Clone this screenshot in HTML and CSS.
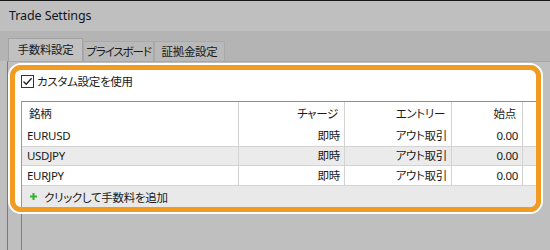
FILE: index.html
```html
<!DOCTYPE html>
<html lang="ja">
<head>
    <meta charset="UTF-8">
    <title>Trade Settings</title>
    <link rel="stylesheet" href="styles.css">
</head>
<body>
    <div class="edge"></div>
    <div class="titlebar">Trade Settings</div>

    <div class="tabstrip">
        <div class="tab active">手数料設定</div>
        <div class="tab tight">プライスボード</div>
        <div class="tab">証拠金設定</div>
    </div>

    <div class="panel">
        <div class="spot">
            <div class="spot-inner">
                <label class="check-row">
                    <span class="checkbox">
                        <svg width="11" height="11" viewBox="0 0 11 11">
                            <path d="M1.5 5.5 L4.2 8.2 L9.6 2.2" fill="none" stroke="#222" stroke-width="1.3"/>
                        </svg>
                    </span>
                    カスタム設定を使用
                </label>

                <div class="grid">
                    <div class="cell head first">銘柄</div>
                    <div class="cell head">チャージ</div>
                    <div class="cell head">エントリー</div>
                    <div class="cell head">始点</div>
                    <div class="cell head last"></div>

                    <div class="cell first">EURUSD</div>
                    <div class="cell">即時</div>
                    <div class="cell">アウト取引</div>
                    <div class="cell">0.00</div>
                    <div class="cell last"></div>

                    <div class="cell first alt">USDJPY</div>
                    <div class="cell alt">即時</div>
                    <div class="cell alt">アウト取引</div>
                    <div class="cell alt">0.00</div>
                    <div class="cell last alt"></div>

                    <div class="cell first line">EURJPY</div>
                    <div class="cell line">即時</div>
                    <div class="cell line">アウト取引</div>
                    <div class="cell line">0.00</div>
                    <div class="cell last line"></div>

                    <div class="add-row">
                        <svg class="plus" width="7" height="7" viewBox="0 0 7 7">
                            <rect x="2.5" y="0" width="2" height="7" fill="#2fb52f"/>
                            <rect x="0" y="2.5" width="7" height="2" fill="#2fb52f"/>
                        </svg>
                        クリックして手数料を追加
                    </div>
                </div>
            </div>
        </div>
        <div class="tail"></div>
    </div>
</body>
</html>
```

FILE: styles.css
```css
body {
    margin: 0;
    width: 550px;
    height: 250px;
    overflow: hidden;
    background-color: #bfbfbf;
    font-family: "Noto Sans", "Noto Sans CJK JP", sans-serif;
    font-size: 11.5px;
    letter-spacing: -0.3px;
    color: #1a1a1a;
    font-feature-settings: "palt";
}
.edge {
    height: 1px;
    background-color: #151515;
}
.titlebar {
    height: 30px;
    line-height: 30px;
    padding-left: 9px;
    font-size: 12.5px;
    letter-spacing: -0.1px;
    color: #14141e;
    background-color: #bfbfbf;
}
.tabstrip {
    height: 30px;
    display: flex;
    align-items: flex-end;
    padding-left: 8px;
    background-color: #b4b4b4;
}
.tab {
    box-sizing: border-box;
    width: 71px;
    height: 20px;
    line-height: 19px;
    text-align: center;
    border: 1px solid #a9a9a9;
    border-bottom: none;
    background-color: #b9b9b9;
    color: #1a1a1a;
    white-space: nowrap;
}
.tab.tight {
    letter-spacing: -1.1px;
}
.tab.active {
    width: 75px;
    height: 23px;
    line-height: 22px;
    background-color: #c1c1c1;
    border-color: #a3a3a3;
}
.panel {
    margin-left: 7px;
    height: 189px;
    border-left: 1px solid #7a7a7a;
    border-top: 1px solid #a6a6a6;
    background-color: #bfbfbf;
}
.spot {
    margin-top: 1px;
    width: 535px;
    box-sizing: border-box;
    border: 2px solid #fff;
    border-radius: 13px;
}
.spot-inner {
    border: 5px solid #f29b21;
    border-radius: 11px;
    background-color: #fff;
    overflow: hidden;
}
.check-row {
    display: flex;
    align-items: center;
    height: 13px;
    padding: 5px 0 13px 6px;
    line-height: 13px;
}
.checkbox {
    width: 11px;
    height: 11px;
    border: 1px solid #333;
    margin-right: 3px;
    display: flex;
}
.grid {
    margin-left: 6px;
    border-left: 1px solid #9a9a9a;
    border-top: 1px solid #8f8f8f;
    display: grid;
    grid-template-columns: 217px 106px 107px 71px 1fr;
}
.cell {
    box-sizing: border-box;
    height: 20px;
    line-height: 20px;
    text-align: right;
    padding-right: 4px;
    border-right: 1px solid #d3d3d3;
    white-space: nowrap;
}
.cell.first {
    text-align: left;
    padding-left: 5px;
}
.cell.last {
    border-right: none;
}
.cell.head {
    height: 24px;
    line-height: 24px;
    padding-right: 6px;
}
.cell.head.first {
    padding-left: 7px;
}
.cell.alt {
    background-color: #ebebeb;
    border-top: 1px solid #d3d3d3;
    border-bottom: 1px solid #d3d3d3;
    line-height: 18px;
}
.cell.line {
    border-bottom: 1px solid #d3d3d3;
    line-height: 19px;
}
.add-row {
    grid-column: 1 / -1;
    height: 21px;
    display: flex;
    align-items: center;
    padding-left: 8px;
    background-color: #e9e9e9;
}
.plus {
    margin-right: 7px;
}
.tail {
    margin-left: 13px;
    height: 37px;
    border-left: 1px solid #7e7e7e;
}
```
